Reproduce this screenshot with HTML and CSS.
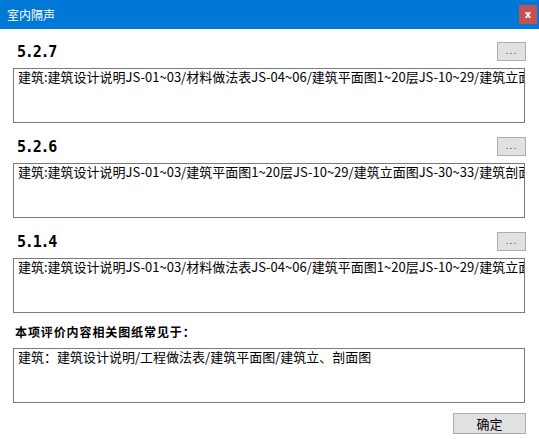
FILE: index.html
```html
<!DOCTYPE html>
<html lang="zh-CN">
<head>
  <meta charset="UTF-8" />
  <title>室内隔声</title>
  <link rel="stylesheet" href="styles.css">
</head>
<body>
  <div class="window">
    <!-- Title bar -->
    <div class="titlebar">
      <span class="title">室内隔声</span>
      <button class="close">x</button>
    </div>

    <div class="content">
      <div class="section">
        <div class="section-head">
          <span class="code">5.2.7</span>
          <button class="more">...</button>
        </div>
        <div class="box">建筑:建筑设计说明JS-01~03/材料做法表JS-04~06/建筑平面图1~20层JS-10~29/建筑立面图JS-30~33/建筑剖面图JS-34~35</div>
      </div>

      <div class="section">
        <div class="section-head">
          <span class="code">5.2.6</span>
          <button class="more">...</button>
        </div>
        <div class="box">建筑:建筑设计说明JS-01~03/建筑平面图1~20层JS-10~29/建筑立面图JS-30~33/建筑剖面图JS-34~35</div>
      </div>

      <div class="section">
        <div class="section-head">
          <span class="code">5.1.4</span>
          <button class="more">...</button>
        </div>
        <div class="box">建筑:建筑设计说明JS-01~03/材料做法表JS-04~06/建筑平面图1~20层JS-10~29/建筑立面图JS-30~33</div>
      </div>

      <div class="summary-head">本项评价内容相关图纸常见于：</div>
      <div class="box summary">建筑：建筑设计说明/工程做法表/建筑平面图/建筑立、剖面图</div>

      <div class="footer">
        <button class="ok">确定</button>
      </div>
    </div>
  </div>
</body>
</html>
```

FILE: styles.css
```css
* {
  margin: 0;
  padding: 0;
  box-sizing: border-box;
}

body {
  font-family: "Noto Sans CJK SC", sans-serif;
  background: #fff;
  width: 539px;
  height: 439px;
  overflow: hidden;
}

.titlebar {
  height: 29px;
  background: #0078d7;
  display: flex;
  align-items: center;
  justify-content: space-between;
  padding: 0 2px 0 7px;
}

.title {
  color: #fff;
  font-size: 12px;
  line-height: 12px;
}

.close {
  width: 18px;
  height: 19px;
  background: #c75050;
  border: none;
  color: #fff;
  font-family: "DejaVu Sans", sans-serif;
  font-weight: bold;
  font-size: 10px;
  line-height: 19px;
}

.content {
  padding: 13px 14px 0 13px;
}

.section {
  margin-bottom: 14px;
}

.section-head {
  height: 19px;
  display: flex;
  align-items: center;
  justify-content: space-between;
  margin-bottom: 7px;
}

.code {
  padding-left: 4px;
  font-family: "DejaVu Sans Mono", monospace;
  font-weight: bold;
  font-size: 15px;
  letter-spacing: -1.2px;
  color: #000;
}

.more {
  width: 29px;
  height: 19px;
  margin-right: -1px;
  background: #e1e1e1;
  border: 1px solid #adadad;
  font-family: "DejaVu Sans", sans-serif;
  font-size: 9px;
  line-height: 17px;
  letter-spacing: 1px;
  color: #333;
}

.box {
  height: 55px;
  border: 1px solid #7a7a7a;
  background: #fff;
  padding: 0 4px;
  font-size: 13px;
  line-height: 16px;
  color: #000;
  white-space: nowrap;
  overflow: hidden;
}

.summary-head {
  height: 27px;
  margin-top: -11px;
  margin-bottom: 5px;
  padding: 5px 0 0 2px;
  font-size: 12px;
  font-weight: bold;
  letter-spacing: 0.9px;
  line-height: 22px;
  color: #000;
}

.footer {
  display: flex;
  justify-content: flex-end;
  margin-top: 10px;
  margin-right: -1px;
}

.ok {
  width: 73px;
  height: 21px;
  background: #e1e1e1;
  border: 1px solid #adadad;
  font-family: "Noto Sans CJK SC", sans-serif;
  font-size: 13px;
  line-height: 19px;
  color: #000;
}
```
